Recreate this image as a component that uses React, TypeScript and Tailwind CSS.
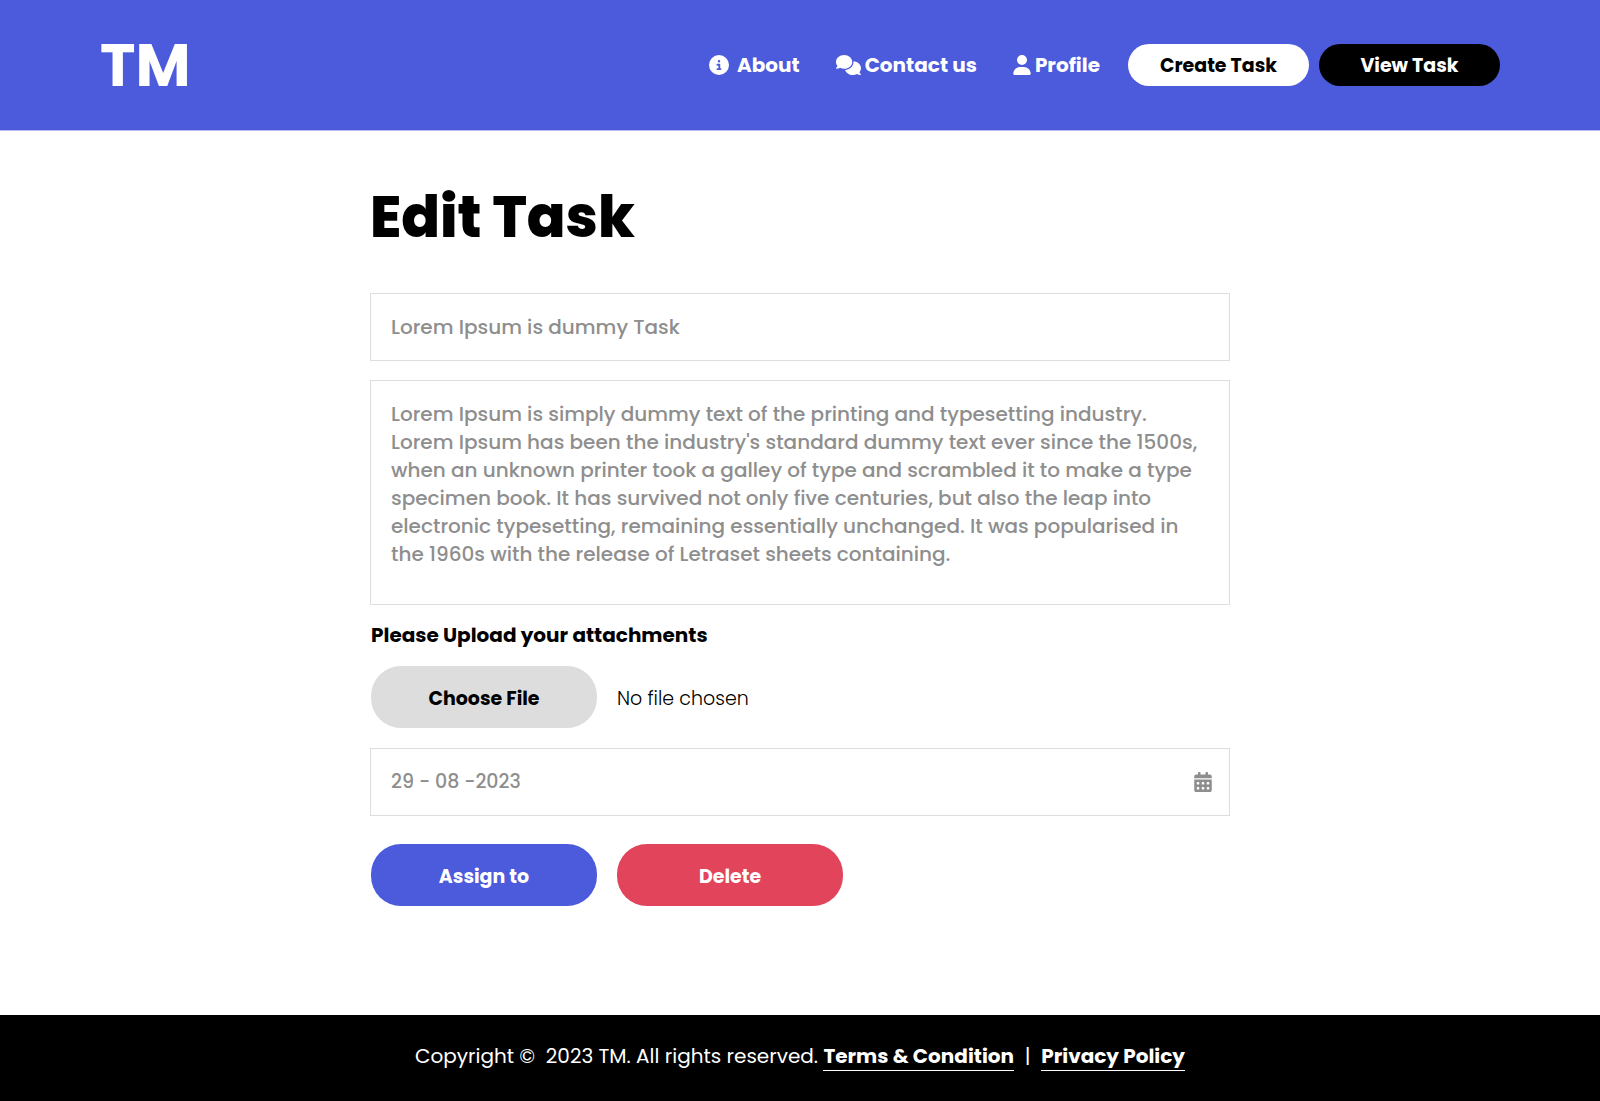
import { FaCalendarAlt } from "react-icons/fa";
import { FaCircleInfo, FaComments, FaUser } from "react-icons/fa6";

const description = `Lorem Ipsum is simply dummy text of the printing and typesetting industry.
Lorem Ipsum has been the industry's standard dummy text ever since the 1500s,
when an unknown printer took a galley of type and scrambled it to make a type
specimen book. It has survived not only five centuries, but also the leap into
electronic typesetting, remaining essentially unchanged. It was popularised in
the 1960s with the release of Letraset sheets containing.`;

function Header() {
  return (
    <header className="border-b border-[#b9bef2] bg-[#4c5adc] text-white">
      <div className="mx-auto flex h-[129px] max-w-[1440px] items-center justify-between px-5">
        <a href="#" className="text-[60px] leading-none font-bold">
          TM
        </a>
        <div className="flex items-center gap-7">
          <nav className="flex items-center gap-9 text-[20px] leading-7 font-bold">
            <a href="#about" className="flex items-center gap-2">
              <FaCircleInfo className="size-5" />
              About
            </a>
            <a href="#contact" className="flex items-center gap-1">
              <FaComments className="h-5 w-[25px]" />
              Contact us
            </a>
            <a href="#profile" className="flex items-center gap-1">
              <FaUser className="h-5 w-[18px]" />
              Profile
            </a>
          </nav>
          <div className="flex gap-2.5 text-[19px] font-bold">
            <button className="h-[42px] w-[181px] rounded-full bg-white pt-1 text-black">Create Task</button>
            <button className="h-[42px] w-[181px] rounded-full bg-black pt-1 text-white">View Task</button>
          </div>
        </div>
      </div>
      <div className="h-px" />
    </header>
  );
}

export default function App() {
  return (
    <div className="flex min-h-screen flex-col bg-white font-['Poppins','Inter',sans-serif] text-black">
      <Header />
      <main className="mx-auto w-full max-w-[860px] grow pt-[54px] pb-[109px]">
        <h1 className="text-[57px] leading-[64px] font-extrabold">Edit Task</h1>
        <form className="mt-11 flex flex-col" onSubmit={(e) => e.preventDefault()}>
          <input
            type="text"
            aria-label="Task title"
            defaultValue="Lorem Ipsum is dummy Task"
            className="h-[68px] w-full border border-[#dedede] px-5 text-[20px] font-medium text-[#8e8e8e] outline-none"
          />
          <textarea
            aria-label="Task description"
            defaultValue={description}
            className="mt-[19px] h-[225px] w-full resize-none overflow-hidden border border-[#dedede] px-5 py-[19px] text-[20px] leading-7 font-medium text-[#8e8e8e] outline-none"
          />
          <label htmlFor="attachment" className="mt-4 pl-px text-[20px] leading-7 font-bold">
            Please Upload your attachments
          </label>
          <div className="mt-[17px] flex items-center gap-5 pl-px text-[19px]">
            <label
              htmlFor="attachment"
              className="flex h-[62px] w-[226px] items-center justify-center rounded-[30px] bg-[#dddddd] pt-1 font-bold"
            >
              Choose File
            </label>
            <input id="attachment" type="file" className="sr-only" />
            <span className="pt-1 font-light">No file chosen</span>
          </div>
          <div className="mt-5 flex h-[68px] items-center border border-[#dedede] pr-[17px] pl-5 text-[#8e8e8e]">
            <input
              type="text"
              aria-label="Due date"
              defaultValue="29 - 08 -2023"
              className="min-w-0 grow text-[19px] font-medium outline-none"
            />
            <button type="button" aria-label="Open calendar">
              <FaCalendarAlt className="h-5 w-[18px]" />
            </button>
          </div>
          <div className="mt-7 flex gap-5 pl-px text-[19px] font-bold text-white">
            <button className="h-[62px] w-[226px] rounded-[30px] bg-[#4c5adc] pt-1">Assign to</button>
            <button type="button" className="h-[62px] w-[226px] rounded-[30px] bg-[#e2445c] pt-1">
              Delete
            </button>
          </div>
        </form>
      </main>
      <footer className="flex h-[86px] items-center justify-center bg-black pb-1 text-[20px] leading-7 text-white">
        <p className="whitespace-pre">
          {"Copyright ©  2023 TM. All rights reserved. "}
          <a href="#terms" className="border-b border-white font-bold">
            Terms &amp; Condition
          </a>
          {"  |  "}
          <a href="#privacy" className="border-b border-white font-bold">
            Privacy Policy
          </a>
        </p>
      </footer>
    </div>
  );
}
